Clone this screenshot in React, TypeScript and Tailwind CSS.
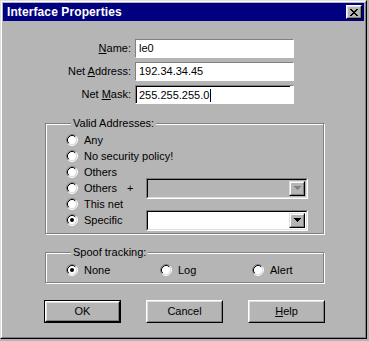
import React from "react";

const Radio = ({ checked }: { checked?: boolean }) => (
  <svg width="12" height="12" viewBox="0 0 12 12" className="shrink-0">
    <circle cx="6" cy="6" r="4.5" fill="#fff" />
    <path d="M2.11 9.89A5.5 5.5 0 0 1 9.89 2.11" fill="none" stroke="#808080" strokeWidth="1" />
    <path d="M9.89 2.11A5.5 5.5 0 0 1 2.11 9.89" fill="none" stroke="#fff" strokeWidth="1" />
    <path d="M2.82 9.18A4.5 4.5 0 0 1 9.18 2.82" fill="none" stroke="#000" strokeWidth="1" />
    <path d="M9.18 2.82A4.5 4.5 0 0 1 2.82 9.18" fill="none" stroke="#dfdfdf" strokeWidth="1" />
    {checked && <circle cx="6" cy="6" r="2" fill="#000" />}
  </svg>
);

const Arrow = ({ color }: { color: string }) => (
  <svg width="7" height="4" viewBox="0 0 7 4" shapeRendering="crispEdges">
    <path d="M0 0h7v1H0z M1 1h5v1H1z M2 2h3v1H2z M3 3h1v1H3z" fill={color} />
  </svg>
);

const Combo = ({ disabled }: { disabled?: boolean }) => (
  <div className="w-[162px] h-[21px] shrink-0 border border-t-[#808080] border-l-[#808080] border-r-white border-b-white">
    <div
      className={
        "h-full flex justify-end items-stretch p-px border border-t-black border-l-black border-r-[#dfdfdf] border-b-[#dfdfdf] " +
        (disabled ? "bg-[#b5b5b5]" : "bg-white")
      }
    >
      <div className="w-[16px] border border-t-[#dfdfdf] border-l-[#dfdfdf] border-r-black border-b-black bg-[#b5b5b5]">
        <div className="h-full flex items-center justify-center border border-t-white border-l-white border-r-[#808080] border-b-[#808080]">
          <Arrow color={disabled ? "#808080" : "#000"} />
        </div>
      </div>
    </div>
  </div>
);

const Field = ({
  label,
  value,
  focused,
}: {
  label: React.ReactNode;
  value: string;
  focused?: boolean;
}) => (
  <div className="flex items-center h-[19px]">
    <div className="w-[128px] text-right">{label}</div>
    <div
      className={
        "ml-[4px] w-[159px] h-full bg-white flex items-center pl-[3px] border " +
        (focused
          ? "border-t-[#808080] border-l-[#808080] border-r-white border-b-white"
          : "border-t-[#808080] border-l-[#808080] border-r-white border-b-white")
      }
    >
      <div
        className={
          "w-full h-full flex items-center " +
          (focused ? "border-t border-l border-black -ml-[3px] pl-[2px]" : "-ml-[3px] pl-[3px]")
        }
      >
        <span>{value}</span>
        {focused && <span className="inline-block w-px h-[13px] bg-black ml-px" />}
      </div>
    </div>
  </div>
);

const Btn = ({ children, def }: { children: React.ReactNode; def?: boolean }) => (
  <div className={"w-[77px] h-[23px] " + (def ? "border border-black" : "")}>
    <div className="h-full border border-t-white border-l-white border-r-black border-b-black">
      <div className="h-full flex items-center justify-center border border-t-[#dfdfdf] border-l-[#dfdfdf] border-r-[#808080] border-b-[#808080]">
        {children}
      </div>
    </div>
  </div>
);

const RLabel = ({ children, checked }: { children: React.ReactNode; checked?: boolean }) => (
  <div className="flex items-center gap-[6px]">
    <Radio checked={checked} />
    <span>{children}</span>
  </div>
);

export default function App() {
  return (
    <div className="w-[369px] h-[341px] bg-[#b5b5b5] text-black text-[11px] leading-[13px] font-['Liberation_Sans',Arial,sans-serif]">
      <div className="w-[367px] h-[339px] border border-t-[#dfdfdf] border-l-[#dfdfdf] border-r-black border-b-black">
        <div className="h-full flex flex-col p-px border border-t-white border-l-white border-r-[#808080] border-b-[#808080]">
          {/* Title bar */}
          <div className="h-[18px] bg-[#000080] flex items-center justify-between pl-[4px] pr-[2px]">
            <span className="text-white font-bold text-[12px] tracking-[0.1px]">Interface Properties</span>
            <div className="w-[16px] h-[14px] bg-[#b5b5b5] border border-t-white border-l-white border-r-black border-b-black">
              <div className="h-full flex items-center justify-center border border-t-[#dfdfdf] border-l-[#dfdfdf] border-r-[#808080] border-b-[#808080]">
                <svg width="8" height="7" viewBox="0 0 8 7" shapeRendering="crispEdges">
                  <path
                    d="M0 0h2v1H0z M6 0h2v1H6z M1 1h2v1H1z M5 1h2v1H5z M2 2h4v1H2z M3 3h2v1H3z M2 4h4v1H2z M1 5h2v1H1z M5 5h2v1H5z M0 6h2v1H0z M6 6h2v1H6z"
                    fill="#000"
                  />
                </svg>
              </div>
            </div>
          </div>

          {/* Fields */}
          <div className="mt-[18px] flex flex-col gap-[4px]">
            <Field label={<><u>N</u>ame:</>} value="le0" />
            <Field label={<>Net <u>A</u>ddress:</>} value="192.34.34.45" />
            <Field label={<>Net <u>M</u>ask:</>} value="255.255.255.0" focused />
          </div>

          {/* Valid Addresses */}
          <fieldset className="mt-[13px] ml-[42px] w-[279px] border border-[#808080] shadow-[inset_1px_1px_0_#fff,1px_1px_0_#fff] pt-[2px] pb-[5px] pl-[20px]">
            <legend className="ml-[5px] px-[2px] bg-[#b5b5b5]">Valid Addresses:</legend>
            <div className="h-[16px] flex items-center"><RLabel>Any</RLabel></div>
            <div className="h-[16px] flex items-center"><RLabel>No security policy!</RLabel></div>
            <div className="h-[16px] flex items-center"><RLabel>Others</RLabel></div>
            <div className="h-[16px] flex items-center">
              <div className="w-[80px]">
                <RLabel>
                  Others<span className="ml-[10px]">+</span>
                </RLabel>
              </div>
              <Combo disabled />
            </div>
            <div className="h-[16px] flex items-center"><RLabel>This net</RLabel></div>
            <div className="h-[16px] flex items-center">
              <div className="w-[80px]">
                <RLabel checked>Specific</RLabel>
              </div>
              <Combo />
            </div>
          </fieldset>

          {/* Spoof tracking */}
          <fieldset className="mt-[12px] ml-[42px] w-[279px] border border-[#808080] shadow-[inset_1px_1px_0_#fff,1px_1px_0_#fff] pt-[3px] pb-[4px] pl-[20px]">
            <legend className="ml-[5px] px-[2px] bg-[#b5b5b5]">Spoof tracking:</legend>
            <div className="h-[16px] flex items-center">
              <div className="w-[94px]"><RLabel checked>None</RLabel></div>
              <div className="w-[92px]"><RLabel>Log</RLabel></div>
              <div><RLabel>Alert</RLabel></div>
            </div>
          </fieldset>

          {/* Buttons */}
          <div className="mt-[17px] ml-[41px] flex gap-[25px]">
            <Btn def>OK</Btn>
            <Btn>Cancel</Btn>
            <Btn><span><u>H</u>elp</span></Btn>
          </div>
        </div>
      </div>
    </div>
  );
}
